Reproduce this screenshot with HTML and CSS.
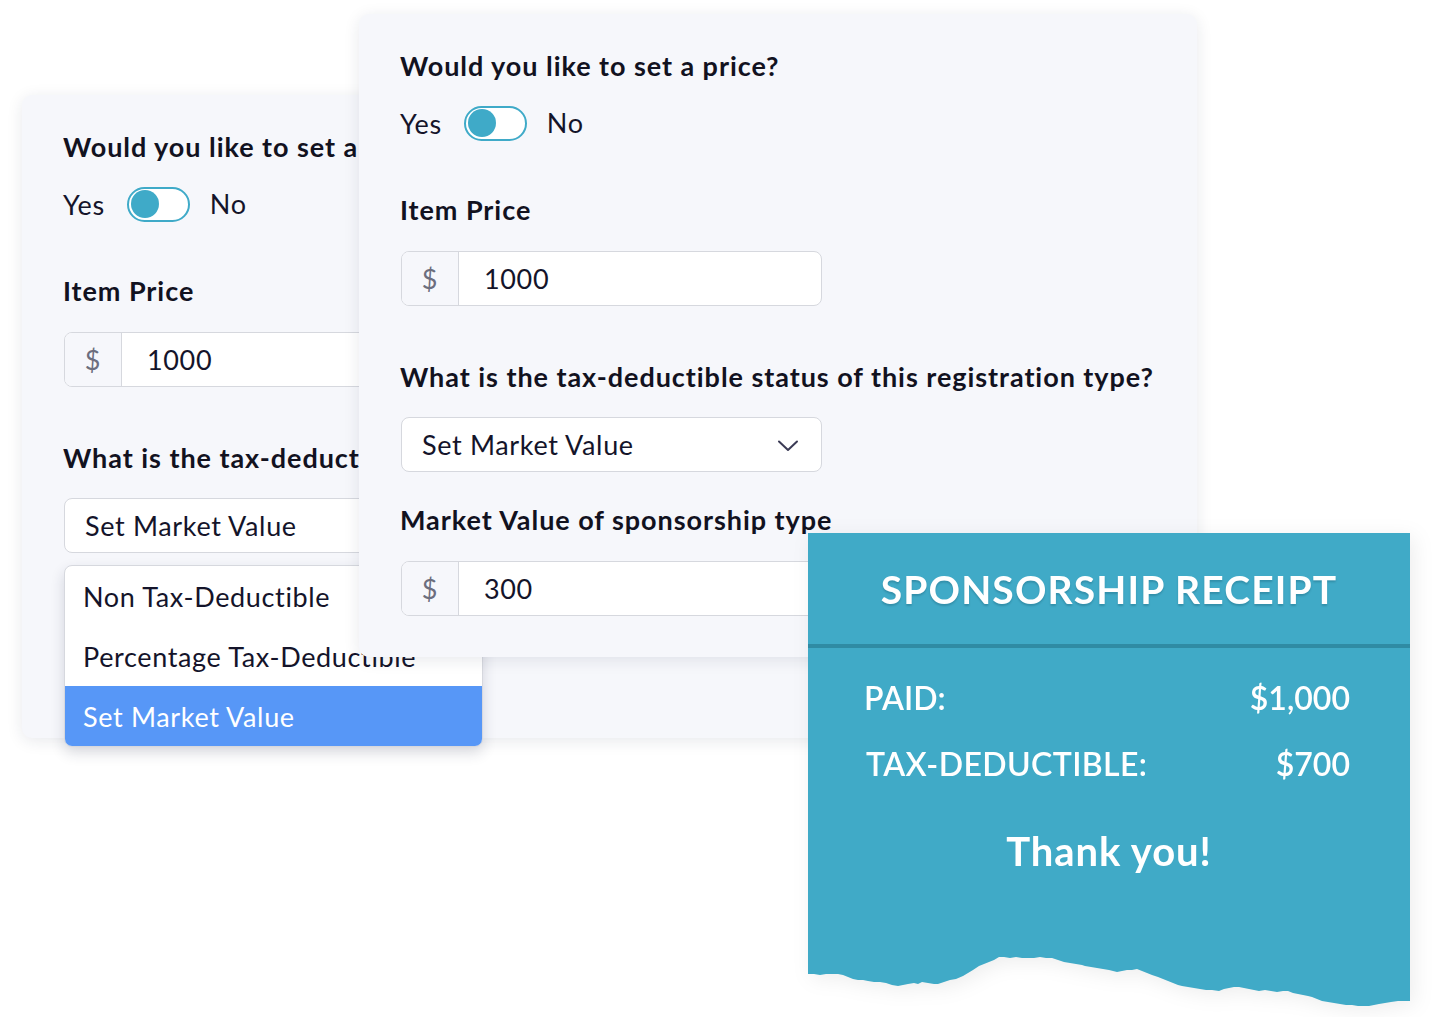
FILE: index.html
```html
<!DOCTYPE html>
<html lang="en">
<head>
<meta charset="utf-8">
<title>Sponsorship pricing</title>
<link rel="stylesheet" href="styles.css">
</head>
<body>
<div class="stage">

  <section class="card card-back">
    <h2 class="q">Would you like to set a price?</h2>
    <div class="toggle-row">
      <span>Yes</span>
      <span class="toggle"><span class="knob"></span></span>
      <span class="no">No</span>
    </div>
    <h3 class="q label">Item Price</h3>
    <div class="field"><span class="addon">$</span><span class="value">1000</span></div>
    <h3 class="q q-tax">What is the tax-deductible status of this registration type?</h3>
    <div class="select-wrap">
      <div class="select"><span>Set Market Value</span>
        <svg class="chev" viewBox="0 0 22 12" width="22" height="12"><path d="M2 1.5 L11 10 L20 1.5" fill="none" stroke="#3b3b55" stroke-width="2" stroke-linecap="round" stroke-linejoin="round"/></svg>
      </div>
      <ul class="menu">
        <li>Non Tax-Deductible</li>
        <li>Percentage Tax-Deductible</li>
        <li class="active">Set Market Value</li>
      </ul>
    </div>
  </section>

  <section class="card card-front">
    <h2 class="q">Would you like to set a price?</h2>
    <div class="toggle-row">
      <span>Yes</span>
      <span class="toggle"><span class="knob"></span></span>
      <span class="no">No</span>
    </div>
    <h3 class="q label">Item Price</h3>
    <div class="field"><span class="addon">$</span><span class="value">1000</span></div>
    <h3 class="q q-tax">What is the tax-deductible status of this registration type?</h3>
    <div class="select-wrap">
      <div class="select"><span>Set Market Value</span>
        <svg class="chev" viewBox="0 0 22 12" width="22" height="12"><path d="M2 1.5 L11 10 L20 1.5" fill="none" stroke="#3b3b55" stroke-width="2" stroke-linecap="round" stroke-linejoin="round"/></svg>
      </div>
    </div>
    <h3 class="q label-mv">Market Value of sponsorship type</h3>
    <div class="field"><span class="addon">$</span><span class="value">300</span></div>
  </section>

  <section class="receipt">
    <div class="receipt-paper">
      <div class="receipt-head">SPONSORSHIP RECEIPT</div>
      <div class="receipt-rule"></div>
      <div class="receipt-body">
        <div class="r-row"><span>PAID:</span><span>$1,000</span></div>
        <div class="r-row r-row2"><span class="r-key">TAX-DEDUCTIBLE:</span><span>$700</span></div>
        <div class="thanks">Thank you!</div>
      </div>
    </div>
    <svg class="tear" viewBox="0 0 602 55" width="602" height="55" preserveAspectRatio="none">
      <path fill="#40aac7" d="M0,0 L0,20 6,20 12,21 18,20 24,20 30,20 35,21 40,23 45,25 50,26 55,26 60,27 66,28 72,28 78,29 84,31 90,32 95,31 100,30 106,29 110,30 114,28 120,29 126,30 130,30 136,28 142,26 148,25 155,22 160,19 165,16 171,12 176,10 181,8 186,6 191,3 196,3 202,4 208,3 214,4 220,4 226,4 232,3 238,4 244,4 250,6 256,8 262,9 268,10 274,11 277,12 283,13 289,14 295,15 301,16 305,17 309,18 314,17 319,16 324,16 329,15 334,17 339,19 344,21 350,23 355,25 360,27 365,29 370,31 374,32 380,33 386,34 392,35 398,36 404,36 411,37 416,35 421,34 426,33 431,33 436,34 441,35 446,36 451,37 457,36 463,37 469,38 475,37 480,37 485,39 490,40 495,41 500,42 504,43 509,45 514,47 520,48 526,49 532,50 538,51 544,51 550,52 556,52 561,52 566,51 571,50 577,49 583,48 590,47 596,47 602,47 L602,0 Z"/>
    </svg>
  </section>

</div>
</body>
</html>
```

FILE: styles.css
```css
* { box-sizing: border-box; }

html, body {
  margin: 0;
  padding: 0;
  background: #ffffff;
}

body {
  font-family: "Lato", "Open Sans", sans-serif;
  color: #14142a;
}

.stage {
  position: relative;
  width: 1438px;
  height: 1017px;
  overflow: hidden;
}

/* ---------- cards ---------- */
.card {
  position: absolute;
  width: 838px;
  height: 643px;
  padding: 36px 41px 0;
  background: #f6f7fb;
  border-radius: 10px;
  box-shadow: 0 3px 16px rgba(30, 40, 70, 0.10);
  display: flex;
  flex-direction: column;
  align-items: flex-start;
}

.card-back { left: 22px; top: 95px; z-index: 1; }
.card-front { left: 359px; top: 14px; z-index: 2; }

/* the back card's long headings disappear under the front card */
.card-back .q {
  max-width: 297px;
  overflow: hidden;
}

.q {
  margin: 0;
  font-size: 27px;
  line-height: 32px;
  font-weight: 700;
  letter-spacing: 0.95px;
  color: #12121f;
  white-space: nowrap;
}

.label { margin-top: 53px; }
.q-tax { margin-top: 55px; }
.label-mv { margin-top: 32px; }

.toggle-row {
  margin-top: 23px;
  height: 36px;
  display: flex;
  align-items: center;
  font-size: 27px;
  letter-spacing: 0.65px;
  color: #14142a;
}

.toggle {
  position: relative;
  width: 63px;
  height: 35px;
  margin: 0 20px 0 22px;
  border: 2px solid #3faac8;
  border-radius: 18px;
  background: #ffffff;
  display: flex;
  align-items: center;
  padding-left: 2px;
}

.knob {
  width: 28px;
  height: 28px;
  border-radius: 50%;
  background: #3faac8;
}

.no { position: relative; top: -1px; }

/* ---------- inputs ---------- */
.field {
  margin-top: 25px;
  margin-left: 1px;
  width: 421px;
  height: 55px;
  display: flex;
  border: 1.5px solid #d6d8de;
  border-radius: 8px;
  background: #ffffff;
  overflow: hidden;
  font-size: 27px;
  letter-spacing: 0.65px;
}

.addon {
  width: 57px;
  flex: none;
  display: flex;
  align-items: center;
  justify-content: center;
  background: #f6f7fb;
  border-right: 1.5px solid #d6d8de;
  color: #6c6e7e;
}

.value {
  display: flex;
  align-items: center;
  padding-left: 25px;
  color: #14142a;
}

.select-wrap {
  position: relative;
  margin-top: 24px;
  margin-left: 1px;
  width: 421px;
}

.select {
  height: 55px;
  display: flex;
  align-items: center;
  justify-content: space-between;
  padding: 0 22px 0 20px;
  border: 1.5px solid #d6d8de;
  border-radius: 8px;
  background: #ffffff;
  font-size: 27px;
  letter-spacing: 0.65px;
  color: #14142a;
}

.chev { display: block; margin-top: 2px; }

.menu {
  position: absolute;
  left: 0;
  top: 67px;
  width: 419px;
  margin: 0;
  padding: 0;
  list-style: none;
  background: #ffffff;
  border: 1.5px solid #d6d8de;
  border-radius: 8px;
  box-shadow: 0 6px 14px rgba(30, 40, 70, 0.16);
  overflow: hidden;
  font-size: 27px;
  letter-spacing: 0.65px;
}

.menu li {
  height: 60px;
  display: flex;
  align-items: center;
  padding-left: 18px;
  color: #14142a;
  white-space: nowrap;
}

.menu li.active {
  background: #5797f7;
  color: #ffffff;
}

/* ---------- receipt ---------- */
.receipt {
  position: absolute;
  left: 808px;
  top: 533px;
  width: 602px;
  z-index: 3;
  filter: drop-shadow(4px 4px 10px rgba(0, 0, 0, 0.07));
}

.receipt-paper {
  height: 422px;
  background: #40aac7;
  color: #ffffff;
  display: flex;
  flex-direction: column;
}

.receipt-head {
  height: 111px;
  display: flex;
  align-items: center;
  justify-content: center;
  font-size: 39px;
  font-weight: 700;
  letter-spacing: 1.15px;
  text-shadow: 0 2px 2px rgba(0, 50, 70, 0.22);
}

.receipt-rule {
  height: 4px;
  background: #2f8ba4;
}

.receipt-body {
  padding: 30px 60px 0 56px;
  display: flex;
  flex-direction: column;
}

.r-row {
  display: flex;
  justify-content: space-between;
  font-size: 32px;
  line-height: 40px;
  font-weight: 600;
}

.r-key { letter-spacing: 0.4px; }

.r-row2 { margin-top: 26px; padding-left: 2px; }

.thanks {
  margin-top: 43px;
  text-align: center;
  font-size: 40px;
  line-height: 48px;
  font-weight: 700;
  letter-spacing: 0.9px;
  padding-left: 4px;
}

.tear {
  display: block;
  margin-top: -1px;
}
```
